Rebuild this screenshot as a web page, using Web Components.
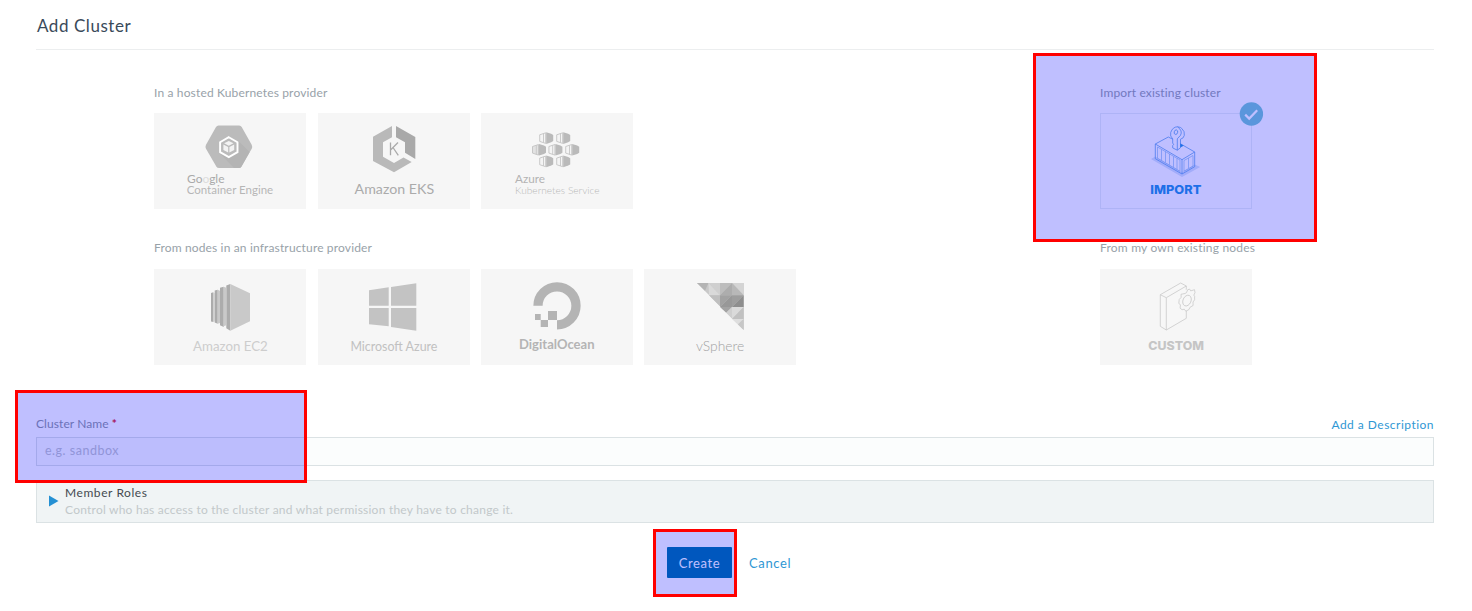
<!DOCTYPE html>
<html lang="en">
<head>
<meta charset="utf-8">
<title>Add Cluster</title>
<style>
html,body{margin:0;background:#fff}
body{width:1472px;height:611px;overflow:hidden;font-family:"Lato","Open Sans",sans-serif}
</style>
</head>
<body>
<add-cluster-page></add-cluster-page>
<script>
const define = (name, html) => customElements.define(name, class extends HTMLElement {
  constructor() {
    super();
    const t = document.createElement('template');
    t.innerHTML = html;
    this.attachShadow({ mode: 'open' }).appendChild(t.content.cloneNode(true));
  }
});

define('page-header', `<style>
:host{display:flex;box-sizing:border-box;height:50px;border-bottom:1px solid #eceeef;color:#3a4a5a;font-size:17px;line-height:20px;padding:16px 0 0 1px}
span{letter-spacing:.55px}
</style><span><slot></slot></span>`);

define('provider-group', `<style>
:host{display:block;height:var(--h,155px)}
h2{margin:0;font-weight:400;font-size:12px;line-height:16px;color:#98a2a9;letter-spacing:var(--ls,.15px);white-space:nowrap}
h2 span{display:inline-block}
div{display:flex;gap:11px;margin-top:var(--gap,12px)}
::slotted(provider-tile:nth-of-type(2)){margin-left:1px}
</style><h2><span><slot name="label"></slot></span></h2><div><slot></slot></div>`);

define('provider-tile', `<style>
:host{display:block;position:relative;width:152px;height:96px;background:#f6f6f6}
:host([selected]){background:#fff;box-shadow:inset 0 0 0 1px #e9eff3}
.check{display:none;position:absolute;left:139px;top:-11px}
:host([selected]) .check{display:block}
</style><slot></slot>
<svg class="check" width="25" height="25" viewBox="0 0 25 25"><circle cx="12.4" cy="12" r="11.7" fill="#79c9d0"/><path d="M6.2 12.600l4 4 8-8.400" fill="none" stroke="#fff" stroke-width="2.2"/></svg>`);

const art = (name, inner) => define('logo-' + name, `<style>
:host{display:block;width:152px;height:96px}svg{display:block}
text{font-family:Lato,sans-serif}
.heavy{font-family:Inter,Lato,sans-serif;font-weight:800}
</style><svg width="152" height="96" viewBox="0 0 152 96">${inner}</svg>`);

const label = (t, x, y, w, size, fill, extra = '') =>
  `<text x="${x}" y="${y}" textLength="${w}" lengthAdjust="spacingAndGlyphs" font-size="${size}" fill="${fill}" ${extra}>${t}</text>`;

art('gke', `
<path d="M64.5 12.5h20.600q1.700 0 2.600 1.500l10 17.700q1 2 0 4L87.500 53.500q-.9 1.500-2.600 1.500H65q-1.800 0-2.700-1.500L52 35.700q-1-2 0-4L62 14q.9-1.500 2.500-1.500z" fill="#bbb"/>
<path d="M84 27.500l11.600 11.600L87.500 53.500q-.9 1.500-2.600 1.500H80L66.500 41z" fill="#b4b4b4"/>
<path d="M74.800 24.200l8.700 5v9.900l-8.700 5-8.700-5v-9.900z" fill="#bbb" stroke="#fff" stroke-width="1.900"/>
<path d="M74.800 28l4.700 2.300-4.700 2.400-4.700-2.400zM69.400 31.500l4.800 2.500v5.600l-4.800-2.700zM80.200 31.500L75.400 34v5.600l4.800-2.700z" fill="#f3f3f3"/>
<text x="33" y="69.500" font-size="12.300" textLength="37.500" lengthAdjust="spacingAndGlyphs" fill="#aaa">Go<tspan fill="#ddd">o</tspan>gle</text>
${label('Container Engine', 32.700, 81.2, 86.500, 11.5, '#b6b6b6')}`);

art('eks', `
<path d="M74 13v11.300l-9 5v14.400L76 50l9.500-5.500 8.200 4.500L76 59.300 55 48V23.700z" fill="#b9b9b9"/>
<path d="M78 13l19.300 11v22L87 39.800V29.300l-9-5z" fill="#a9a9a9"/>
<path d="M72.500 29.500v12.800M80 29.500l-7.200 7.200M75 34.500l5.300 7.800" stroke="#aaa" stroke-width="1.300" fill="none"/>
${label('Amazon EKS', 36.6, 81, 79.5, 13.7, '#ababab')}`);

const pod = (x, y, light) => `<g transform="translate(${x} ${y})"><path d="M.5 2.500L6.500.5v10.600L.5 9.100z" fill="${light ? '#e2e2e2' : '#f4f4f4'}" stroke="#bebebe" stroke-width=".8"/><path d="M4.300 1.200v9.200" stroke="#c6c6c6" stroke-width=".9"/><path d="M7 0l5 1.500 2 1.200v6.100L12 10l-5 1.600z" fill="#bababa"/></g>`;
art('aks', `${pod(58.2,19.3)}${pod(75.2,19.3)}${pod(51,31,1)}${pod(67.4,31)}${pod(84.2,31)}${pod(58.2,42.6)}${pod(75.2,42.6)}
${label('Azure', 34, 69.7, 30, 11.8, '#b3b3b3')}
${label('Kubernetes Service', 34, 80.7, 84.5, 10.6, '#b8b8b8', 'font-weight="300"')}`);

art('ec2', `
<path d="M57 24l2.300-.8v29.900L57 52.500zM60.700 21.500l3-.7v34l-3-1.300zM66 18.700l3.700-1v40.200l-3.700-1.600zM72.300 16.500l4-1.600v46.900l-4-2.500z" fill="#acacac"/>
<path d="M59.300 23.500l1.400.7v28l-1.400.8zM63.700 20.800l2.300 1V54l-2.300.7zM69.700 17.700l2.600 1v37.600l-2.600 1zM76.300 14.900L96 24.300v28L76.300 61.800z" fill="#c9c9c9"/>
${label('Amazon EC2', 39, 81.5, 74.8, 13.3, '#cdcdcd')}`);

art('azure', `
<path d="M51 21.300l19.700-3v18.400H51zM73 18l25.300-3.700v22.400H73zM51 39h19.700v18.300l-19.700-2zM73 39h25.300v22.700L73 58z" fill="#c3c3c3"/>
${label('Microsoft Azure', 32.4, 81.5, 87, 12.6, '#c1c1c1')}`);

art('ocean', `
<path d="M57 36.700A19 19 0 1 1 76 55.800" fill="none" stroke="#b4b4b4" stroke-width="9.300"/>
<path d="M67 42h9v9h-9zM59.700 51H67v7h-7.300zM54 45h5.700v6H54z" fill="#b4b4b4"/>
${label('DigitalOcean', 38, 80.2, 75.5, 12.4, '#b4b4b4', 'font-weight="700"')}`);

art('vsphere', `
<path d="M53 14h46.700v47z" fill="#c8c8c8"/>
<path d="M53 14h11.500L61 21.700z" fill="#b4b4b4"/><path d="M64.500 14H76v12.300z" fill="#cfcfcf"/><path d="M64.500 14L76 26.300H65z" fill="#d9d9d9"/>
<path d="M76 14h12L76 26.300z" fill="#bdbdbd"/><path d="M88 14v12.300H76z" fill="#adadad"/><path d="M88 14h11.700v12.300z" fill="#d4d4d4"/><path d="M88 14l11.700 12.300H88z" fill="#b8b8b8"/>
<path d="M65 26.300h11v11z" fill="#bfbfbf"/><path d="M76 26.300h12L76 38z" fill="#a2a2a2"/><path d="M88 26.300V38H76z" fill="#989898"/><path d="M88 26.300h11.700L88 38z" fill="#9d9d9d"/><path d="M99.700 26.300V38H88z" fill="#8e8e8e"/>
<path d="M76 38h12l-5.800 5.700z" fill="#a3a3a3"/><path d="M88 38v11.500l-5.800-5.800z" fill="#cfcfcf"/><path d="M88 38h11.700L88 50z" fill="#dadada"/><path d="M99.700 38v12H88z" fill="#c1c1c1"/><path d="M88 50h11.700l-5.800 5.500z" fill="#dedede"/><path d="M99.700 50v11l-5.800-5.500z" fill="#c7c7c7"/>
${label('vSphere', 52, 81.7, 48.3, 13, '#a2a2a2', 'font-weight="300"')}`);

art('import', `
<path d="M51 46l4.300-2.500L82 59l12.700-7.500 5.500 2.500L82 64z" fill="#d8e6f8"/>
<g fill="none" stroke="#65a5e8" stroke-width=".8">
<path d="M72.700 26.200L68.300 24 55.300 31v14.700L82 61l12.700-7.300V39L80.500 30.800M55.300 31L82 46.700 94.700 39M82 46.700V61"/>
<path stroke-width=".6" stroke="#7fb4ec" d="M57.500 34v11.300l22.500 13V47M57.500 34L80 47M61.500 36.500v10.700M65.500 38.700v10.700M69.500 41v10.700M73.500 43.500V54M77 45.500V56M84 47.500v10.700l9-5V42.500zM88.500 45v10"/>
<path d="M72.700 25.800q-3-2.500-2-6.300 2-5.700 6.800-5.700 3.500.3 4.300 1.700 3.300 3 2.500 6.800-.6 3.200-3.800 3.900v8.500l-3.200 2.500-4.600-2.300v-2.500l1-.9-1-1.400zM77.500 13.800q5.500 4 3 8.500l-3.200 3.500v11.400"/>
<ellipse cx="76" cy="19.200" rx="1.700" ry="2.300" transform="rotate(18 76 19)"/></g>
<path d="M80.300 30.500l3.300 2.200-3.300 1.900z" fill="#2994e0"/>
${label('IMPORT', 50.3, 80.700, 51, 11.6, '#2994e0', 'class="heavy"')}`);

art('custom', `
<g fill="#f7f7f7" stroke="#c9c9c9" stroke-width=".8" stroke-linejoin="round">
<path d="M60.300 25.700L80.700 14l5.600 3v32.300L66.300 61l-6-3.700zM60.300 25.700l6 3 20-11.700M66.300 28.700V61"/>
<path stroke="none" d="M77.500 24L87 20.500v21L79 42z"/>
<path d="M85 24.500l1.500-.8 1.200-3 2-.5 1 1.700 3.800-1.200.5 3-1.200 2.400.8 1.200v3.500l-1.600 2.200.1 3.500-3 1.700-1.300 2.500-3 1.500-1.500-2-2.200.5-2-1.500.3-3.500-1.600-1.200.4-4 2-2.200-.2-3z"/>
<ellipse cx="87" cy="31.600" rx="4" ry="5.600" transform="rotate(24 87 31.600)"/></g>
${label('CUSTOM', 48.300, 80.900, 55.700, 11.6, '#c5c5c5', 'class="heavy"')}`);

define('text-link', `<style>
:host{display:inline-block;color:#2f97d4;white-space:nowrap;letter-spacing:var(--ls,0)}
</style><slot></slot>`);

define('name-field', `<style>
:host{display:block}
header{display:flex;justify-content:space-between;font-size:12px;line-height:16px;height:21px;color:#8f989f}
label{letter-spacing:.08px}
b{color:#d22;font-weight:700}
.link{padding-top:1px;display:block;--ls:.48px}
.box{box-sizing:border-box;height:29px;border:1px solid #dbe2e4;background:#fbfdfd;padding:4px 8px;font-size:12.5px;line-height:17px;color:#c2c6ca}
.box span{letter-spacing:.52px}
</style><header><label>Cluster Name <b>*</b></label><div class="link"><slot></slot></div></header>
<div class="box"><span>e.g. sandbox</span></div>`);

define('role-panel', `<style>
:host{display:flex;box-sizing:border-box;height:43px;margin-top:14px;border:1px solid #dbe2e4;background:#f0f4f5;padding-left:12px;align-items:flex-start}
svg{display:block;margin:14px 6px 0 0}
div{font-size:12px;line-height:17px;padding-top:3px}
p{margin:0}
.t{color:#444a50;letter-spacing:.57px}.d{color:#c2c8ca;letter-spacing:.23px}
</style><svg width="10" height="12" viewBox="0 0 10 12"><path d="M0 .5v11L9.500 6z" fill="#2590d3"/></svg>
<div><p class="t"><span><slot name="title"></slot></span></p><p class="d"><span><slot></slot></span></p></div>`);

define('form-actions', `<style>
:host{display:flex;margin-top:24px;padding-left:631px;gap:17px;align-items:center;font-size:13px}
button{all:unset;box-sizing:border-box;width:65px;height:31px;background:#0075a8;border-radius:1px;color:#fff;text-align:center;font-size:13px;line-height:32px;letter-spacing:.65px}
text-link{--ls:.65px}
</style><button><span>Create</span></button><text-link>Cancel</text-link>`);

define('highlight-box', `<style>
:host{display:block;position:absolute;box-sizing:border-box;border:3px solid #f00;background:rgba(0,0,255,.25);background-clip:padding-box;pointer-events:none}
</style>`);

define('add-cluster-page', `<style>
:host{display:block;position:relative;height:611px;padding:0 38px 0 36px}
.row{display:flex;padding-left:118px}
.row>:first-child{width:946px}
.first{padding-top:35px;--h:155px}
.second{--h:176px;--gap:13px}
</style>
<page-header>Add Cluster</page-header>
<div class="row first">
<provider-group><span slot="label">In a hosted Kubernetes provider</span>
<provider-tile><logo-gke></logo-gke></provider-tile><provider-tile><logo-eks></logo-eks></provider-tile><provider-tile><logo-aks></logo-aks></provider-tile></provider-group>
<provider-group><span slot="label">Import existing cluster</span><provider-tile selected><logo-import></logo-import></provider-tile></provider-group>
</div>
<div class="row second">
<provider-group><span slot="label">From nodes in an infrastructure provider</span>
<provider-tile><logo-ec2></logo-ec2></provider-tile><provider-tile><logo-azure></logo-azure></provider-tile><provider-tile><logo-ocean></logo-ocean></provider-tile><provider-tile><logo-vsphere></logo-vsphere></provider-tile></provider-group>
<provider-group style="--ls:.2px"><span slot="label">From my own existing nodes</span><provider-tile><logo-custom></logo-custom></provider-tile></provider-group>
</div>
<name-field><text-link>Add a Description</text-link></name-field>
<role-panel><span slot="title">Member Roles</span>Control who has access to the cluster and what permission they have to change it.</role-panel>
<form-actions></form-actions>
<highlight-box style="left:1033px;top:53px;width:284px;height:189px"></highlight-box>
<highlight-box style="left:15px;top:390px;width:292px;height:93px"></highlight-box>
<highlight-box style="left:653px;top:529px;width:84px;height:68px"></highlight-box>`);
</script>
</body>
</html>
